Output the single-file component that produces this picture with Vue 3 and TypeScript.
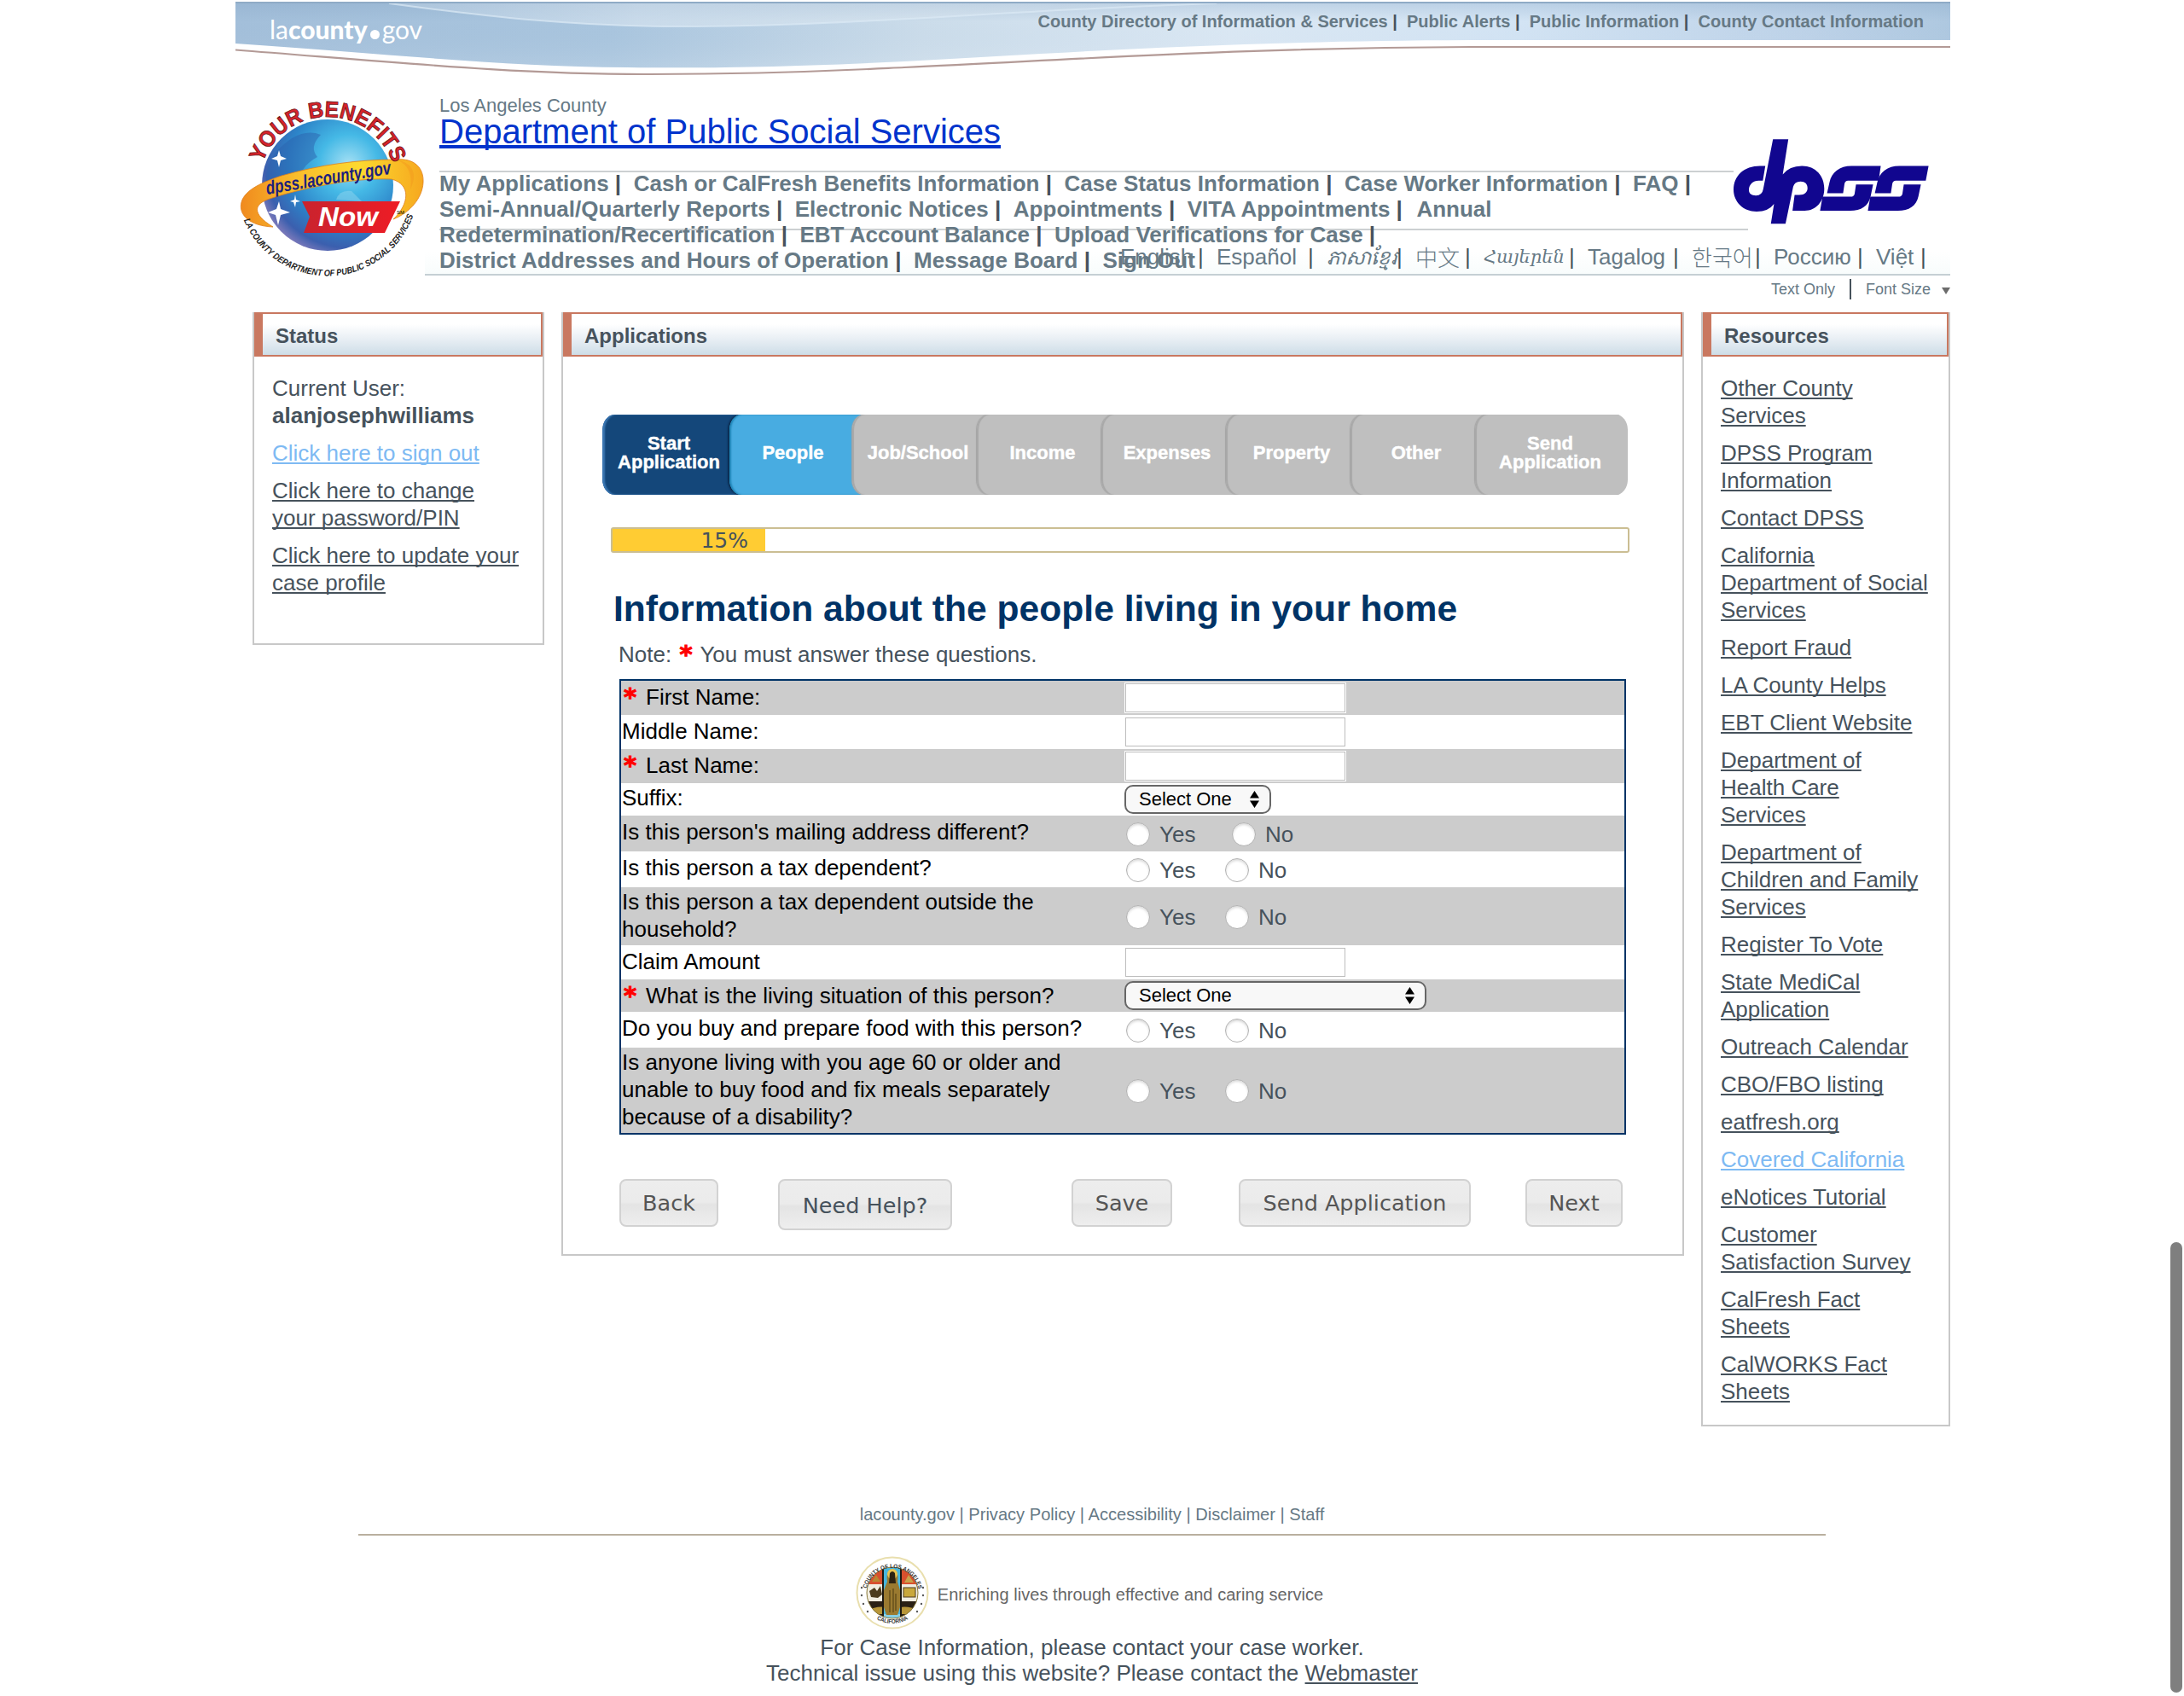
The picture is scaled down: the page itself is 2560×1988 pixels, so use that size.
<script setup lang="ts">
interface Row {
  label: string[]
  required?: boolean
  height: number
  top: number
  kind: 'text' | 'select' | 'radio'
  width?: number
  wide?: boolean
}

const topLinks = [
  'County Directory of Information & Services',
  'Public Alerts',
  'Public Information',
  'County Contact Information',
]

const navRows: string[][] = [
  ['My Applications', 'Cash or CalFresh Benefits Information', 'Case Status Information', 'Case Worker Information', 'FAQ'],
  ['Semi-Annual/Quarterly Reports', 'Electronic Notices', 'Appointments', 'VITA Appointments', 'Annual'],
  ['Redetermination/Recertification', 'EBT Account Balance', 'Upload Verifications for Case'],
  ['District Addresses and Hours of Operation', 'Message Board', 'Sign Out'],
]
const unseparated = ['Annual', 'Sign Out']

const languages = [
  { name: 'English', width: 91 },
  { name: 'Español', width: 107 },
  { name: 'ភាសាខ្មែរ', width: 82, cls: 'khmer' },
  { name: '中文', width: 58, cls: 'cjk' },
  { name: 'Հայերեն', width: 100, cls: 'armenian' },
  { name: 'Tagalog', width: 100 },
  { name: '한국어', width: 74, cls: 'cjk' },
  { name: 'Россию', width: 98 },
  { name: 'Việt', width: 52 },
]

const steps = [
  { lines: ['Start', 'Application'], state: 'done' },
  { lines: ['People'], state: 'current' },
  { lines: ['Job/School'], state: 'todo' },
  { lines: ['Income'], state: 'todo' },
  { lines: ['Expenses'], state: 'todo' },
  { lines: ['Property'], state: 'todo' },
  { lines: ['Other'], state: 'todo' },
  { lines: ['Send', 'Application'], state: 'todo' },
]

const rows: Row[] = [
  { label: ['First Name:'], required: true, height: 40, top: 3, kind: 'text' },
  { label: ['Middle Name:'], height: 40, top: 3, kind: 'text' },
  { label: ['Last Name:'], required: true, height: 40, top: 3, kind: 'text' },
  { label: ['Suffix:'], height: 38, top: 1, kind: 'select', width: 172 },
  { label: ["Is this person's mailing address different?"], height: 42, top: 3, kind: 'radio', wide: true },
  { label: ['Is this person a tax dependent?'], height: 42, top: 3, kind: 'radio' },
  { label: ['Is this person a tax dependent outside the', 'household?'], height: 68, top: 1, kind: 'radio' },
  { label: ['Claim Amount'], height: 40, top: 3, kind: 'text' },
  { label: ['What is the living situation of this person?'], required: true, height: 38, top: 3, kind: 'select', width: 354 },
  { label: ['Do you buy and prepare food with this person?'], height: 42, top: 3, kind: 'radio' },
  {
    label: ['Is anyone living with you age 60 or older and', 'unable to buy food and fix meals separately', 'because of a disability?'],
    height: 100, top: 1, kind: 'radio',
  },
]

const resources: string[][] = [
  ['Other County', 'Services'],
  ['DPSS Program', 'Information'],
  ['Contact DPSS'],
  ['California', 'Department of Social', 'Services'],
  ['Report Fraud'],
  ['LA County Helps'],
  ['EBT Client Website'],
  ['Department of', 'Health Care', 'Services'],
  ['Department of', 'Children and Family', 'Services'],
  ['Register To Vote'],
  ['State MediCal', 'Application'],
  ['Outreach Calendar'],
  ['CBO/FBO listing'],
  ['eatfresh.org'],
  ['Covered California'],
  ['eNotices Tutorial'],
  ['Customer', 'Satisfaction Survey'],
  ['CalFresh Fact', 'Sheets'],
  ['CalWORKS Fact', 'Sheets'],
]
</script>

<template>
  <div class="page">
    <div class="container">
      <header class="banner">
        <svg class="wave" viewBox="0 0 2010 100" width="2010" height="100">
          <defs>
            <linearGradient id="sky" x1="0" x2="1" y1="0" y2="0">
              <stop offset="0" stop-color="#a3bfda" />
              <stop offset=".22" stop-color="#a9c5de" />
              <stop offset=".4" stop-color="#cbdcea" />
              <stop offset=".58" stop-color="#dbe8f4" />
              <stop offset=".75" stop-color="#d3e4f4" />
              <stop offset=".92" stop-color="#bdd2e8" />
              <stop offset="1" stop-color="#aec8e0" />
            </linearGradient>
            <linearGradient id="glint" x1="0" x2="1" y1="0" y2="0">
              <stop offset="0" stop-color="#fff" stop-opacity=".15" />
              <stop offset=".3" stop-color="#fff" stop-opacity=".35" />
              <stop offset="1" stop-color="#fff" stop-opacity="0" />
            </linearGradient>
            <linearGradient id="shade" x1="0" x2="0" y1="0" y2="1">
              <stop offset="0" stop-color="#86a6c6" stop-opacity=".35" />
              <stop offset=".3" stop-color="#86a6c6" stop-opacity="0" />
              <stop offset="1" stop-color="#fff" stop-opacity=".12" />
            </linearGradient>
          </defs>
          <path d="M0 2H2010V47H1447C1180 48 1000 60 784 72C640 79 540 80 460 79C310 78 180 63 0 51Z" fill="url(#sky)" />
          <path d="M0 2H2010V47H1447C1180 48 1000 60 784 72C640 79 540 80 460 79C310 78 180 63 0 51Z" fill="url(#shade)" />
          <path d="M180 4C300 20 400 31 520 31C720 31 900 12 1150 4Z" fill="url(#glint)" />
          <path d="M180 4C300 20 400 31 520 31C720 31 900 12 1150 4" fill="none" stroke="#dbe9f5" stroke-width="2" stroke-opacity=".7" />
          <path d="M0 3H2010" stroke="#8fabc6" stroke-width="2" />
          <path d="M0 58.500C200 74 330 87 480 87C640 87 740 81 784 79C1000 69 1180 56 1447 55H2010" fill="none" stroke="#b39a96" stroke-width="2.200" />
        </svg>
        <div class="county">la<b>county</b><i></i>gov</div>
        <nav class="top-links">
          <template v-for="(l, i) in topLinks" :key="l"><a>{{ l }}</a><span v-if="i < topLinks.length - 1" class="bar">&nbsp;|&nbsp;&nbsp;</span></template>
        </nav>
      </header>

      <section class="masthead">
        <svg class="badge" viewBox="276 115 222 212" width="222" height="212">
          <defs>
            <radialGradient id="globe" cx=".66" cy=".34" r=".75">
              <stop offset="0" stop-color="#a5e0f4" />
              <stop offset=".3" stop-color="#45b9e6" />
              <stop offset=".62" stop-color="#2c83c8" />
              <stop offset=".85" stop-color="#3b5fae" />
              <stop offset="1" stop-color="#8d80bd" />
            </radialGradient>
            <linearGradient id="ribbon" x1="0" x2="1" y1="0" y2="0">
              <stop offset="0" stop-color="#f08a1e" />
              <stop offset=".3" stop-color="#f9bd2c" />
              <stop offset=".65" stop-color="#fdd92f" />
              <stop offset="1" stop-color="#f6a81f" />
            </linearGradient>
            <linearGradient id="flag" x1="0" x2="1" y1="0" y2="0">
              <stop offset="0" stop-color="#c9232e" />
              <stop offset="1" stop-color="#ee1c25" />
            </linearGradient>
            <path id="arcTop" d="M303 218A81 81 0 0 1 465 218" />
            <path id="arcBottom" d="M277.500 217A106.500 106.500 0 0 0 490.500 217" />
          </defs>
          <circle cx="384" cy="217" r="77" fill="url(#globe)" />
          <path d="M322 180Q350 148 376 158Q362 172 372 184Q350 196 352 214L316 226Q306 204 322 180Z" fill="#2c62ae" opacity=".5" />
          <path d="M394 234Q398 222 412 224L424 236Z" fill="#8fd3ee" opacity=".5" />
          <path d="M327 176l2 7 7 3-7 2-2 8-2-8-7-2 7-3zM327 236l2 9 11 4-11 3-3 12-3-12-9-3 10-4zM346 228l1 6 5 2-5 1-1 6-2-6-4-1 5-2z" fill="#fff" />
          <path d="M464 187C486 185 497 197 496 214C495 232 481 249 461 257C480 239 482 216 459 210C410 208 350 222 316 233C298 239 294 250 320 266C293 265 279 252 283 237C287 222 309 213 330 206C375 193 420 187 464 187Z" fill="url(#ribbon)" stroke="#e07f1a" stroke-width=".8" />
          <path d="M464 187C478 192 484 203 481 222C489 206 486 191 464 187Z" fill="#f39a1e" opacity=".5" />
          <path d="M354 236H469L451 273H356L363 254Z" fill="url(#flag)" />
          <text x="373" y="264.500" class="now" textLength="70" lengthAdjust="spacingAndGlyphs">Now</text>
          <text x="0" y="0" transform="translate(313 228) rotate(-9.500)" class="site" textLength="148" lengthAdjust="spacingAndGlyphs">dpss.lacounty.gov</text>
          <text class="arc-top"><textPath href="#arcTop" startOffset="28" textLength="199" lengthAdjust="spacingAndGlyphs">YOUR BENEFITS</textPath></text>
          <text class="arc-bottom"><textPath href="#arcBottom" startOffset="42" textLength="256" lengthAdjust="spacingAndGlyphs">LA COUNTY DEPARTMENT OF PUBLIC SOCIAL SERVICES</textPath></text>
          <text x="465" y="251" font-size="6" font-family="Liberation Sans, sans-serif">SM</text>
        </svg>

        <div class="head-main">
          <div class="county-name">Los Angeles County</div>
          <div class="department"><a>Department of Public Social Services</a></div>
          <nav class="main-nav">
            <div v-for="(r, n) in navRows" :key="n" class="nav-row">
              <template v-for="l in r" :key="l"><a :class="{ wrapped: l === 'Annual' }">{{ l }}</a><span v-if="!unseparated.includes(l)" class="bar">&nbsp;|&nbsp;&nbsp;</span></template>
            </div>
          </nav>
          <div class="languages">
            <span v-for="l in languages" :key="l.name" class="lang"><a :class="l.cls" :style="{ width: l.width + 'px' }">{{ l.name }}</a><span class="bar">|</span></span>
          </div>
          <svg class="dpss" viewBox="862 485 560 305" preserveAspectRatio="none" width="229" height="102">
            <g fill="#11068f">
              <path d="M975 489H1019L1003 612Q1022 582 1058 582C1098 582 1122 618 1122 662C1122 706 1098 739 1066 739H1031L1037 684H1050C1066 684 1074 674 1074 660C1074 646 1067 637 1054 637Q1037 637 1033 655L1011 785H969L978 715Q962 742 928 742C890 742 862 708 862 665C862 617 892 582 938 582H953L946 634H934C918 634 906 648 906 666C906 680 914 686 926 686Q944 686 947 664Z" />
              <path d="M1284 582L1278 634H1190Q1182 634 1180 645L1176 678H1130L1137 640C1143 604 1166 582 1200 582Z" />
              <path d="M1110 739L1117 690H1198Q1207 690 1209 680L1213 647H1262L1255 688C1249 722 1228 739 1196 739Z" />
              <path d="M1421 582L1413 634H1327Q1319 634 1317 645L1313 678H1267L1274 640C1280 604 1303 582 1337 582Z" />
              <path d="M1247 739L1254 690H1335Q1344 690 1346 680L1350 647H1399L1392 688C1386 722 1365 739 1333 739Z" />
            </g>
          </svg>
          <div class="tools">
            <a>Text Only</a><span class="tool-bar"></span><a>Font Size</a><span class="caret"></span>
          </div>
        </div>
      </section>

      <main class="columns">
        <aside class="panel status">
          <h2>Status</h2>
          <ul class="links">
            <li>Current User:<br /><b>alanjosephwilliams</b></li>
            <li class="hot"><a>Click here to sign out</a></li>
            <li><a>Click here to change<br />your password/PIN</a></li>
            <li><a>Click here to update your<br />case profile</a></li>
          </ul>
        </aside>

        <section class="panel applications">
          <h2>Applications</h2>
          <div class="steps">
            <div v-for="(s, i) in steps" :key="i" class="step" :class="s.state">
              <span v-for="t in s.lines" :key="t">{{ t }}</span>
            </div>
          </div>
          <div class="progress"><div class="fill">15%</div></div>
          <h1>Information about the people living in your home</h1>
          <p class="note">Note: <span class="star">*</span>You must answer these questions.</p>
          <div class="form">
            <div v-for="(r, i) in rows" :key="i" class="row" :class="{ shaded: i % 2 === 0 }" :style="{ height: r.height + 'px' }">
              <div class="label" :style="{ paddingTop: r.top + 'px' }">
                <div v-for="(t, n) in r.label" :key="n"><span v-if="r.required" class="star">*</span>{{ t }}</div>
              </div>
              <div v-if="r.kind === 'text'" class="input"></div>
              <div v-else-if="r.kind === 'select'" class="select" :style="{ width: r.width + 'px' }">
                <span>Select One</span>
                <svg viewBox="0 0 11 20" width="11" height="20"><path d="M5.500 0L11 8.500H0ZM0 11.500H11L5.500 20Z" /></svg>
              </div>
              <div v-else class="radios" :class="{ wide: r.wide }">
                <i></i><span class="yes">Yes</span><i></i><span>No</span>
              </div>
            </div>
          </div>
          <div class="buttons">
            <button class="b-back">Back</button>
            <button class="b-help">Need Help?</button>
            <button class="b-save">Save</button>
            <button class="b-send">Send Application</button>
            <button class="b-next">Next</button>
          </div>
        </section>

        <aside class="panel resources">
          <h2>Resources</h2>
          <ul class="links">
            <li v-for="r in resources" :key="r.join()" :class="{ hot: r[0] === 'Covered California' }">
              <a><template v-for="(t, n) in r" :key="n"><br v-if="n" />{{ t }}</template></a>
            </li>
          </ul>
        </aside>
      </main>
    </div>

    <footer>
      <div class="foot-links">lacounty.gov | Privacy Policy | Accessibility | Disclaimer | Staff</div>
      <hr />
      <div class="motto">
        <svg viewBox="0 0 86 86" width="86" height="86">
          <defs>
            <path id="sealTop" d="M12 45A31 31 0 0 1 74 45" />
            <path id="sealBottom" d="M7 43A36 36 0 0 0 79 43" />
            <clipPath id="sealClip"><circle cx="43" cy="43" r="30" /></clipPath>
          </defs>
          <circle cx="43" cy="43" r="41.500" fill="#fff" stroke="#e9dfae" stroke-width="2" />
          <g clip-path="url(#sealClip)">
            <rect x="10" y="10" width="66" height="24" fill="#d8502e" />
            <rect x="10" y="33" width="66" height="20" fill="#f1ede0" />
            <rect x="10" y="53" width="66" height="26" fill="#2a2014" />
            <path d="M13 64Q28 56 43 62Q60 56 74 64V68H12Z" fill="#b8963a" />
            <path d="M16 41l6-4 3 4 4-6 2 10-5 4-8-1z" fill="#4c3b1c" />
            <rect x="56" y="37" width="14" height="11" fill="#c9a83c" stroke="#4c3b1c" />
            <path d="M57 31l5-9 6 9z" fill="#c8a24a" />
            <path d="M19 30l5-8 5 8z" fill="#b98732" />
            <rect x="32" y="10" width="21" height="68" fill="#47b6de" stroke="#1e1a12" stroke-width="2" />
            <rect x="33" y="68" width="19" height="8" fill="#86cfe6" />
            <path d="M43 15Q51 17 49 30L52 40V60L49 69H36L33 60V40L37 30Q35 17 43 15Z" fill="#9a7a30" />
            <circle cx="43" cy="21" r="6" fill="#e9c350" />
            <path d="M40 20Q43 16 46 20L47 32H39Z" fill="#2c2312" />
            <path d="M40 40V66M44 38V66M47 44V64" stroke="#5a4516" stroke-width="1.200" />
          </g>
          <circle cx="43" cy="43" r="30" fill="none" stroke="#8a7a3a" stroke-width="1" />
          <text class="seal-text"><textPath href="#sealTop" startOffset="7" textLength="84" lengthAdjust="spacingAndGlyphs">COUNTY OF LOS ANGELES</textPath></text>
          <text class="seal-text"><textPath href="#sealBottom" startOffset="37" textLength="39" lengthAdjust="spacingAndGlyphs">CALIFORNIA</textPath></text>
          <g fill="#5a5a5a">
            <circle cx="7" cy="37" r="1.200" /><circle cx="7" cy="46" r="1.200" /><circle cx="9" cy="56" r="1.200" /><circle cx="14" cy="65" r="1.200" />
            <circle cx="79" cy="37" r="1.200" /><circle cx="79" cy="46" r="1.200" /><circle cx="77" cy="56" r="1.200" /><circle cx="72" cy="65" r="1.200" />
          </g>
        </svg>
        <span class="slogan">Enriching lives through effective and caring service</span>
      </div>
      <div class="foot-text">For Case Information, please contact your case worker.</div>
      <div class="foot-text">Technical issue using this website? Please contact the <a>Webmaster</a></div>
    </footer>
    <div class="scroll-thumb"></div>
  </div>
</template>

<style>
body {
  background: #fff;
}
</style>

<style scoped>
.page {
  position: relative;
  width: 2560px;
  height: 1988px;
  overflow: hidden;
  background: #fff;
  color: #46525c;
  font-family: "Liberation Sans", Arial, sans-serif;
  font-size: 26px;
  line-height: 32px;
}
.container {
  width: 2010px;
  margin-left: 276px;
}
.bar {
  color: #46525c;
}

/* Banner */
.banner {
  position: relative;
  display: flex;
  justify-content: space-between;
  height: 100px;
}
.wave {
  position: absolute;
  left: 0;
  top: 0;
}
.county {
  position: relative;
  display: flex;
  align-items: baseline;
  margin: 12px 0 0 40px;
  height: 44px;
  line-height: 44px;
  color: #fff;
  font-family: Lato, sans-serif;
  font-size: 30px;
}
.county b {
  font-weight: 900;
}
.county i {
  width: 11px;
  height: 11px;
  margin: 0 3px;
  border-radius: 50%;
  background: #fff;
}
.top-links {
  position: relative;
  margin: 13px 31px 0 0;
  font-size: 20px;
  font-weight: bold;
  line-height: 24px;
  white-space: nowrap;
  color: #667985;
}

/* Masthead */
.masthead {
  display: flex;
  height: 266px;
}
.badge {
  flex: none;
  margin-top: 15px;
  overflow: visible;
}
.head-main {
  position: relative;
  flex: 1;
  height: 223px;
  box-sizing: border-box;
  padding: 14px 0 0 17px;
  border-bottom: 2px solid #c5cfd4;
  background: linear-gradient(#fff 195px, #f8fcfc 221px);
  color: #667985;
}
.county-name {
  font-size: 22px;
  line-height: 20px;
}
.department {
  font-size: 40px;
  line-height: 40px;
}
.department a {
  color: #0033cc;
  text-decoration: underline;
  text-decoration-thickness: 4px;
  text-underline-offset: 2px;
  text-decoration-skip-ink: none;
}
.main-nav {
  width: 1534px;
  height: 121px;
  margin-top: 26px;
  background:
    linear-gradient(#ccd0d2, #ccd0d2) 0 0 / 1517px 2px no-repeat,
    linear-gradient(#ccd0d2, #ccd0d2) 0 68px / 100% 2px no-repeat;
  font-weight: bold;
  letter-spacing: 0.015px;
}
.nav-row {
  height: 30px;
  line-height: 30px;
  white-space: nowrap;
}
.wrapped {
  margin-left: 2px;
}
.languages {
  position: absolute;
  left: 815px;
  top: 186px;
  display: flex;
  line-height: 30px;
  white-space: nowrap;
}
.lang {
  display: flex;
  height: 30px;
}
.lang .bar {
  width: 7px;
  margin: 0 15px 0 0;
}
.lang a {
  overflow: visible;
}
.khmer {
  font-family: "Khmer OS", "Noto Serif Khmer", "Noto Sans Khmer", "DejaVu Sans", sans-serif;
  font-style: italic;
  font-size: 22px;
}
.cjk {
  font-family: "Noto Sans CJK SC", "Noto Sans CJK KR", sans-serif;
  font-weight: 300;
}
.armenian {
  font-family: "DejaVu Serif", serif;
  font-style: italic;
  font-size: 21px;
}
.dpss {
  position: absolute;
  left: 1534px;
  top: 62px;
}
.tools {
  position: absolute;
  right: 0;
  top: 225px;
  display: flex;
  align-items: center;
  height: 28px;
  font-size: 18px;
  line-height: 30px;
  white-space: nowrap;
}
.tool-bar {
  width: 2px;
  height: 24px;
  margin: 0 17px 0 17px;
  background: #46525c;
}
.caret {
  margin: 4px 0 0 13px;
  border: 5.500px solid transparent;
  border-top: 8px solid #6c6c6c;
  border-bottom: 0;
}

/* Columns */
.columns {
  display: flex;
  align-items: flex-start;
  gap: 20px;
  padding-left: 20px;
}
.panel {
  flex: none;
  box-sizing: border-box;
  border: 2px solid #c8c8c8;
  border-top: 0;
}
.panel h2 {
  box-sizing: border-box;
  height: 52px;
  margin: 0;
  padding-left: 15px;
  border: 2px solid #c97860;
  border-left-width: 10px;
  background: linear-gradient(#fff 25%, #e6edf3 65%, #cddde7);
  font-size: 24px;
  line-height: 51px;
}
.status {
  width: 342px;
  height: 390px;
}
.applications {
  width: 1316px;
  height: 1106px;
}
.resources {
  width: 292px;
  height: 1306px;
}
.links {
  margin: 0;
  padding: 21px 0 0 21px;
  list-style: none;
}
.links li {
  margin-bottom: 12px;
  white-space: nowrap;
}
.links a,
.foot-text a {
  text-decoration: underline;
  text-decoration-thickness: 2px;
  text-underline-offset: 2px;
  text-decoration-skip-ink: none;
}
.links .hot {
  color: #7ebaf3;
}

/* Steps */
.steps {
  display: flex;
  width: 1202px;
  margin: 68px 0 0 46px;
  border-radius: 14px / 18px;
  overflow: hidden;
}
.step {
  flex: none;
  display: flex;
  flex-direction: column;
  align-items: center;
  justify-content: center;
  box-sizing: border-box;
  width: 180px;
  height: 94px;
  margin-right: -34px;
  padding: 0 26px 4px 0;
  border-radius: 14px 0 0 14px / 18px 0 0 18px;
  background: #bfbfbf;
  box-shadow: inset 2px 0 1px #a8a8a8, -1px 0 1px #a4a4a4;
  color: #fff;
  font-size: 22px;
  font-weight: bold;
  line-height: 22px;
  -webkit-text-stroke: 0.400px #fff;
}
.step.done {
  margin-right: -31px;
  padding-right: 24px;
  background: #14477a;
  box-shadow: inset 3px 0 2px #3c78b4;
}
.step.current {
  width: 178px;
  padding-right: 29px;
  background: #48ace1;
  box-shadow: inset 2px 0 2px #1f86b8, -2px 0 2px #0a2c50;
}
.step:last-child {
  padding-right: 4px;
}
.progress {
  box-sizing: border-box;
  width: 1194px;
  height: 30px;
  margin: 38px 0 0 56px;
  border: 2px solid #cbbe93;
  border-radius: 3px;
}
.fill {
  box-sizing: border-box;
  width: 179px;
  height: 26px;
  padding-right: 20px;
  background: #ffcc33;
  font-family: "DejaVu Sans", Verdana, sans-serif;
  font-size: 25px;
  line-height: 28px;
  text-align: right;
}
h1 {
  margin: 41px 0 0 59px;
  color: #003366;
  font-size: 42.600px;
  line-height: 49px;
  white-space: nowrap;
}
.note {
  margin: 13px 0 0 65px;
}
.star {
  display: inline-block;
  width: 26px;
  height: 24px;
  padding: 4px 0 0 2px;
  box-sizing: border-box;
  color: #ff0000;
  font-family: "DejaVu Sans", Verdana, sans-serif;
  font-size: 29px;
  font-weight: bold;
  line-height: 24px;
  vertical-align: top;
  -webkit-text-stroke: 1px #ff0000;
}
.label .star {
  width: 28px;
}

/* Form */
.form {
  width: 1176px;
  margin: 13px 0 0 66px;
  border: 2px solid #003366;
}
.row {
  display: flex;
  align-items: flex-start;
  box-sizing: border-box;
}
.row.shaded {
  background: #cccccc;
}
.label {
  width: 589px;
  padding-left: 1px;
  color: #000;
  white-space: nowrap;
}
.input {
  box-sizing: border-box;
  width: 258px;
  height: 34px;
  margin: 3px 0 0 1px;
  border: 1px solid #bdbdbd;
  background: #fff;
  box-shadow: 0 0 0 1px #fff;
}
.select {
  display: flex;
  align-items: center;
  justify-content: space-between;
  box-sizing: border-box;
  height: 34px;
  margin-top: 2px;
  padding: 0 12px 0 15px;
  border: 2px solid #666;
  border-radius: 10px;
  background: #f8f8f8;
  color: #000;
  font-size: 22px;
  line-height: 28px;
}
.radios {
  display: flex;
  align-items: center;
  align-self: center;
  padding: 1px 0 0 2px;
}
.radios i {
  box-sizing: border-box;
  width: 28px;
  height: 28px;
  margin-right: 11px;
  border: 1px solid #b2b2b2;
  border-radius: 50%;
  background: #fff;
  box-shadow: inset 0 2px 3px rgba(0, 0, 0, 0.15);
}
.yes {
  width: 77px;
}
.wide .yes {
  width: 85px;
}

/* Buttons */
.buttons {
  display: flex;
  align-items: flex-start;
  margin: 52px 0 0 66px;
}
button {
  box-sizing: border-box;
  height: 56px;
  padding: 0;
  border: 2px solid #d2d2d2;
  border-radius: 8px;
  background: linear-gradient(#ededed 0, #ebebeb 48%, #e4e4e4 54%, #eeeeee 100%);
  color: #555;
  font-family: "DejaVu Sans", Verdana, sans-serif;
  font-size: 25.500px;
  line-height: 53px;
  white-space: nowrap;
}
.b-back {
  width: 116px;
}
.b-help {
  width: 204px;
  height: 60px;
  margin-left: 70px;
  color: #46525c;
  line-height: 58px;
}
.b-save {
  width: 118px;
  margin-left: 140px;
}
.b-send {
  width: 272px;
  margin-left: 78px;
}
.b-next {
  width: 114px;
  margin-left: 64px;
}

/* Footer */
footer {
  margin-top: 91px;
  text-align: center;
}
.foot-links {
  color: #667985;
  font-size: 20.080px;
  line-height: 24px;
}
hr {
  width: 1720px;
  height: 2px;
  margin: 11px auto 0;
  border: 0;
  background: #b9af9f;
}
.motto {
  display: flex;
  align-items: center;
  justify-content: center;
  gap: 10px;
  margin: 24px 0 6px;
  padding-right: 6px;
}
.slogan {
  padding-top: 3px;
  color: #666;
  font-size: 20px;
  letter-spacing: 0.05px;
  white-space: nowrap;
}
.foot-text {
  line-height: 30px;
}
.scroll-thumb {
  position: absolute;
  right: 2px;
  top: 1456px;
  width: 14px;
  height: 528px;
  border-radius: 7px;
  background: #7f7f7f;
}

/* Badge lettering */
.arc-top {
  fill: #d8232a;
  stroke: #6a1418;
  stroke-width: 0.800px;
  font-size: 26px;
  font-weight: bold;
}
.arc-bottom {
  fill: #222;
  font-size: 10.500px;
  font-weight: bold;
  font-style: italic;
}
.site {
  fill: #1c1f7c;
  font-size: 22px;
  font-weight: bold;
  font-style: italic;
}
.now {
  fill: #fff;
  font-size: 31px;
  font-weight: bold;
  font-style: italic;
}
.seal-text {
  fill: #333;
  font-size: 7px;
  font-weight: bold;
}
</style>
